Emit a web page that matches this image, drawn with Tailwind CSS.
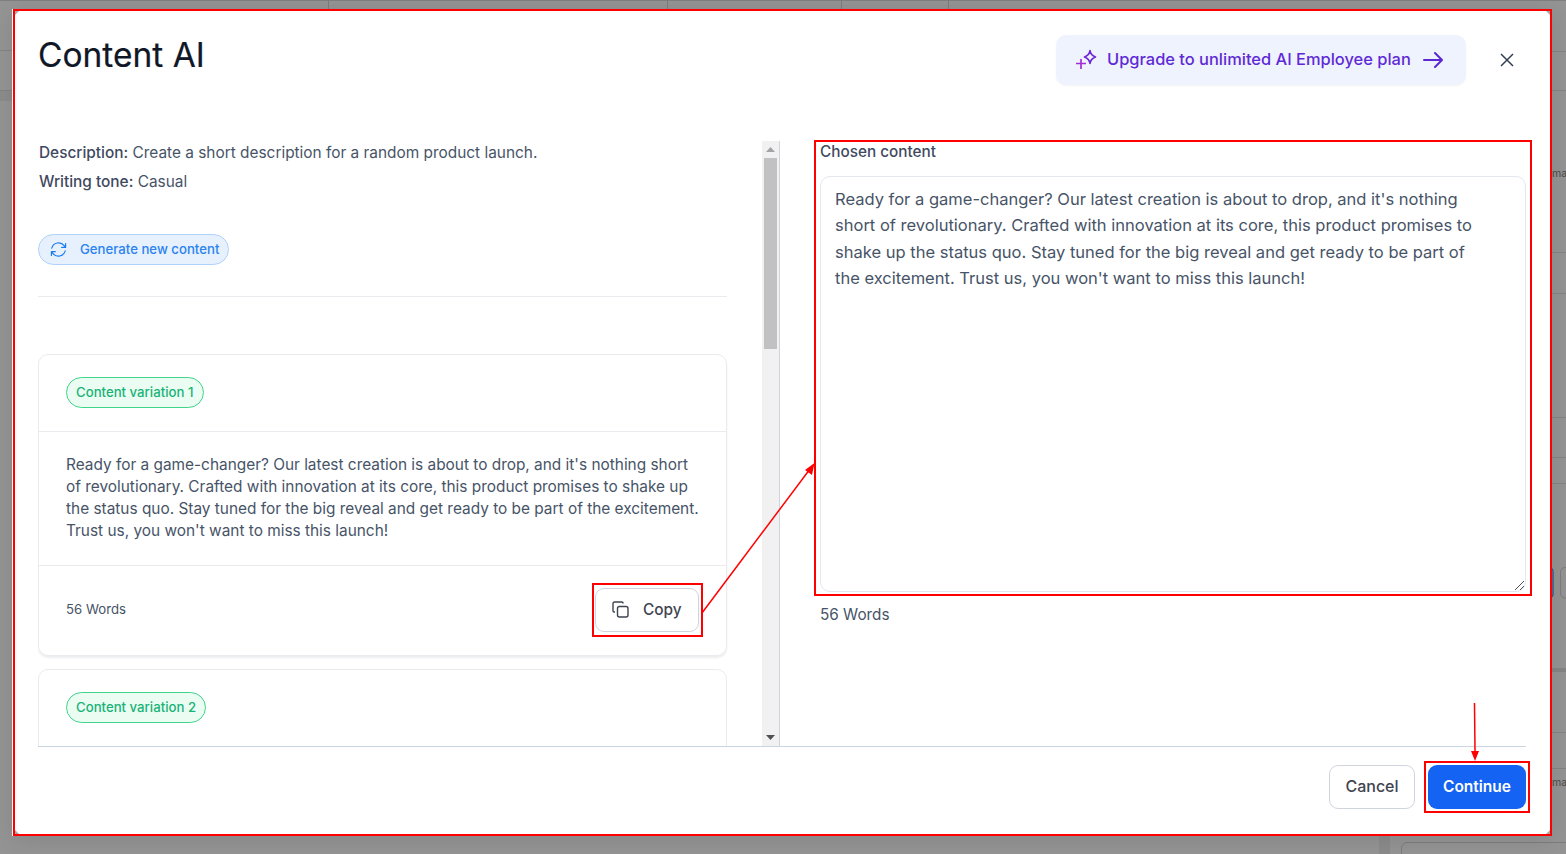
<!DOCTYPE html>
<html>
<head>
<meta charset="utf-8">
<script src="https://cdn.jsdelivr.net/npm/@tailwindcss/browser@4"></script>
</head>
<body class="relative w-[1566px] h-[854px] overflow-hidden bg-[#949494] font-['Inter',sans-serif]">
<svg class="absolute inset-0 w-[1566px] h-[854px]" viewBox="0 0 1566 854" fill="none">
  <path d="M0 0.500H1566" stroke="#7f7f7f"/>
  <path d="M328.500 0V9M667.500 0V9M841.500 0V9M948.500 0V9" stroke="#7d7d7d"/>
  <path d="M0 50.500H13M0 90.500H13M1552 51.500H1566M1552 90.500H1566M1552 252.500H1566M1552 293.500H1566M1552 417.500H1566M1552 457.500H1566M1552 483.500H1566M1552 732.500H1566M1552 768.500H1566" stroke="#848484"/>
  <rect x="0" y="91" width="13" height="10" fill="#8c8c8c"/>
  <rect x="1552" y="668" width="14" height="4" fill="#858585"/>
  <rect x="1379" y="836" width="11" height="18" fill="#8b8b8b"/>
  <path d="M1401.500 854V848A5.500 5.500 0 0 1 1407 842.500H1566" stroke="#7d7d7d"/>
  <path d="M1552 567.500H1549A4 4 0 0 1 1553 571.500V594A4 4 0 0 1 1549 598H1552" stroke="#2c4d8d" stroke-width="1.200"/>
  <path d="M1566 567.500H1565A5 5 0 0 0 1560.500 572.500V593A5 5 0 0 0 1565 598H1566" stroke="#7d7d7d"/>
</svg>
<span class="absolute left-[1552px] top-[165px] text-[10.500px] leading-[18px] text-[#4a4a4a]">ma</span>
<span class="absolute left-[1552px] top-[775px] text-[10.500px] leading-[16px] text-[#4a4a4a]">ma</span>
<div class="absolute left-[13px] top-[9px] w-[1539px] h-[827px] bg-white border-2 border-[#ff0000] flex flex-col shadow-[-1px_0_0_#ffffff,0_4px_24px_rgba(0,0,0,0.10)]">
  <div class="flex items-start justify-between h-[130px] pl-[24px] pr-[36px]">
    <h1 class="mt-[20px] -ml-px text-[33.500px] leading-[48px] font-normal text-[#101828] [-webkit-text-stroke:0.2px_#101828]">Content AI</h1>
    <div class="flex items-center mt-[24px]">
      <div class="flex items-center w-[410px] h-[50px] pl-[19px] rounded-[10px] bg-[#eff3fe] shadow-[0_1px_2px_rgba(16,24,40,0.05)]">
        <svg class="w-[23px] h-[22px]" viewBox="0 0 23 22" fill="none" stroke-width="1.700">
          <path d="M1 14.500H11M6 10V20" stroke="#a42bd6"/>
          <path d="M15 1.500C15.500 5 16.500 6.500 20.500 8C16.500 9.500 15.500 11 15 14.500C14.500 11 13.500 9.500 9.500 8C13.500 6.500 14.500 5 15 1.500Z" stroke="#6d28d9" stroke-linejoin="round"/>
        </svg>
        <span class="ml-[9px] mb-[2px] text-[16.450px] font-medium text-[#5f2ad6]">Upgrade to unlimited AI Employee plan</span>
        <svg class="ml-[12px] w-[20px] h-[18px]" viewBox="0 0 20 18" fill="none" stroke="#5b28d2" stroke-width="2" stroke-linecap="round" stroke-linejoin="round"><path d="M1 9H19M12 2L19 9L12 16"/></svg>
      </div>
      <svg class="ml-[34px] w-[14px] h-[14px]" viewBox="0 0 14 14" fill="none" stroke="#344054" stroke-width="1.500"><path d="M1 1L13 13M13 1L1 13"/></svg>
    </div>
  </div>
  <div class="flex h-[605px] pl-[23px] pr-[24px] relative">
    <div class="w-[742px] h-full flex overflow-hidden border-r border-[#d0d5dd]">
      <div class="w-[724px] h-full overflow-hidden pr-[35px]">
        <div class="-mt-[3px] ml-px text-[15.400px] leading-[29px] text-[#475467]">
          <p><span class="font-medium text-[#3f4a5f]">Description:</span> Create a short description for a random product launch.</p>
          <p><span class="font-medium text-[#3f4a5f]">Writing tone:</span> Casual</p>
        </div>
        <div class="mt-[38px] flex items-center w-[191px] h-[31px] pl-[11px] rounded-full border border-[#aed1fb] bg-[#e6f1fd]">
          <svg class="w-[17px] h-[17px]" viewBox="0 0 24 24" fill="none" stroke="#1d7df0" stroke-width="1.700" stroke-linecap="round" stroke-linejoin="round"><path d="M2.500 10A10 10 0 0 1 20 6.500L22 9M21.500 14A10 10 0 0 1 4 17.500L2 15M22 3.500V9H16.500M2 20.500V15H7.500"/></svg>
          <span class="ml-[13px] text-[13.200px] font-medium text-[#2b82f0]">Generate new content</span>
        </div>
        <div class="mt-[31px] h-px bg-[#e9ebef]"></div>
        <div class="mt-[57px] rounded-[10px] border border-[#e9ebef] shadow-[0_2px_2px_rgba(16,24,40,0.08)] h-[302px]">
          <div class="h-[77px] pl-[27px] flex items-center border-b border-[#e9ebef]">
            <span class="flex items-center h-[31px] w-[138px] pl-[9px] mb-[1px] rounded-full border border-[#3fd58a] bg-[#ebfcf3] text-[13.200px] font-medium text-[#18b377]">Content variation 1</span>
          </div>
          <p class="h-[133px] pl-[27px] pr-[24px] pt-[22px] text-[15.400px] leading-[22px] text-[#475467]">Ready for a game-changer? Our latest creation is about to drop, and it's nothing short of revolutionary. Crafted with innovation at its core, this product promises to shake up the status quo. Stay tuned for the big reveal and get ready to be part of the excitement. Trust us, you won't want to miss this launch!</p>
          <div class="h-[90px] pl-[27px] pr-[27px] flex items-center justify-between border-t border-[#e9ebef]">
            <span class="mb-[2px] text-[13.200px] text-[#475467]">56 Words</span>
            <span class="flex items-center w-[104px] h-[44px] pl-[16px] mb-[2px] rounded-[9px] border border-[#d0d5dd]">
              <svg class="w-[17px] h-[17px]" viewBox="0 0 17 17" fill="none" stroke="#3f4450" stroke-width="1.400" stroke-linejoin="round"><rect x="5.500" y="5.500" width="10.500" height="10.500" rx="2"/><path d="M11 2.500V2.200C11 1.500 10.500 1 9.800 1H2.500C1.600 1 1 1.600 1 2.500V9.800C1 10.500 1.500 11 2.200 11H3"/></svg>
              <span class="ml-[14px] text-[15.400px] font-medium text-[#3f4450]">Copy</span>
            </span>
          </div>
        </div>
        <div class="mt-[13px] rounded-t-[10px] border border-[#e9ebef] h-[100px]">
          <div class="pl-[27px] pt-[22px]">
            <span class="flex items-center h-[31px] w-[140px] pl-[9px] rounded-full border border-[#3fd58a] bg-[#ebfcf3] text-[13.200px] font-medium text-[#18b377]">Content variation 2</span>
          </div>
        </div>
      </div>
      <div class="w-[17px] h-full bg-[#f1f1f1] flex flex-col items-center">
        <svg class="mt-[6px] w-[9px] h-[5px]" viewBox="0 0 9 5"><path d="M4.500 0L9 5H0Z" fill="#a3a3a3"/></svg>
        <div class="mt-[6px] w-[13px] h-[191px] bg-[#c1c1c1]"></div>
        <svg class="mt-auto mb-[6px] w-[9px] h-[5px]" viewBox="0 0 9 5"><path d="M4.500 5L9 0H0Z" fill="#505050"/></svg>
      </div>
    </div>
    <div class="flex-1 pl-[40px]">
      <div class="h-[35px] text-[15.300px] leading-[22px] font-medium text-[#3f4a5f]">Chosen content</div>
      <div class="relative w-full h-[416px] rounded-[10px] border border-[#e4e7ec] pl-[14px] pr-[40px] pt-[9px] text-[16.520px] leading-[26.400px] text-[#475467]">
        Ready for a game-changer? Our latest creation is about to drop, and it's nothing short of revolutionary. Crafted with innovation at its core, this product promises to shake up the status quo. Stay tuned for the big reveal and get ready to be part of the excitement. Trust us, you won't want to miss this launch!
        <svg class="absolute right-[1px] bottom-[1px] w-[9px] h-[9px]" viewBox="0 0 9 9" stroke="#555" stroke-width="1"><path d="M0 9L9 0M5 9L9 5"/></svg>
      </div>
      <div class="mt-[12px] text-[15.300px] leading-[22px] text-[#475467]">56 Words</div>
    </div>
  </div>
  <div class="flex-1 mx-[23px] mr-[24px] border-t border-[#cbd5e1] flex items-start justify-end gap-[13px] pt-[18px]">
    <span class="flex items-center justify-center w-[86px] h-[44px] pb-[2px] rounded-[9px] border border-[#d0d5dd] text-[16px] font-medium text-[#3f4450]">Cancel</span>
    <span class="flex items-center justify-center w-[98px] h-[44px] rounded-[9px] bg-[#1463f3] text-[15.500px] font-semibold text-white">Continue</span>
  </div>
</div>
<svg class="absolute inset-0 w-[1566px] h-[854px] pointer-events-none" viewBox="0 0 1566 854" fill="none">
  <g fill="#a8a8a8">
    <path d="M15 11H19L15 15Z"/>
    <path d="M1550 11H1546L1550 15Z"/>
    <path d="M15 834H19L15 830Z"/>
    <path d="M1550 834H1546L1550 830Z"/>
  </g>
  <g stroke="#ff0000" stroke-width="2">
    <rect x="815" y="141" width="716" height="454"/>
    <rect x="593" y="584" width="109" height="52"/>
    <rect x="1425" y="762" width="104" height="50"/>
    <path d="M702 613L810 469" stroke-width="1.500"/>
    <path d="M1474.500 703L1475 752" stroke-width="1.500"/>
  </g>
  <path d="M814.500 463L812 475L805 470Z" fill="#ff0000"/>
  <path d="M1475 761L1471 751H1479Z" fill="#ff0000"/>
</svg>
</body>
</html>
